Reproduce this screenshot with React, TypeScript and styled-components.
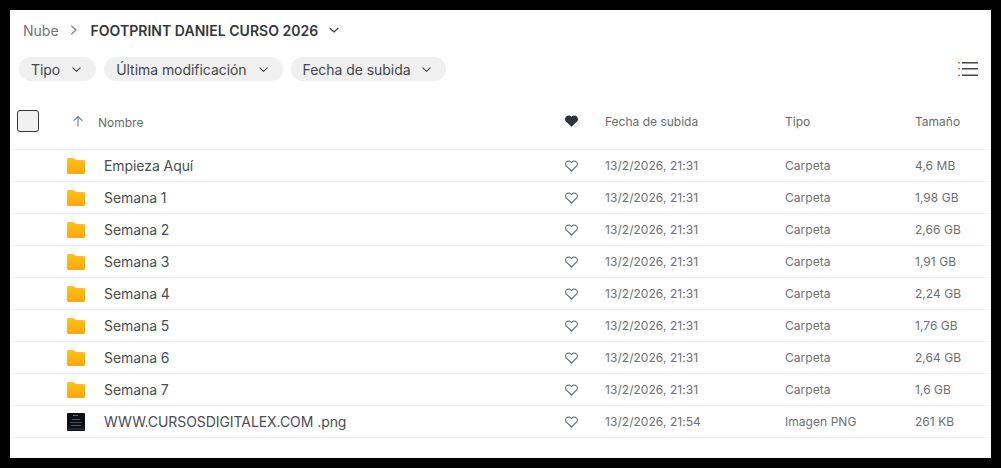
import React from "react";
import styled, { createGlobalStyle } from "styled-components";

const Global = createGlobalStyle`
  html, body { margin: 0; padding: 0; background: #000; }
  * { box-sizing: border-box; }
`;

const Frame = styled.div`
  width: 1001px;
  height: 468px;
  padding: 10px;
  background: #000;
  font-family: Inter, "Liberation Sans", sans-serif;
  overflow: hidden;
`;

const Panel = styled.main`
  height: 448px;
  background: #fff;
  display: flex;
  flex-direction: column;
`;

const Breadcrumb = styled.nav`
  height: 40px;
  padding: 0 0 0 13px;
  display: flex;
  align-items: center;
  font-size: 14px;
`;

const Crumb = styled.span`
  color: #6f7479;
`;

const Current = styled.span`
  color: #33363a;
  font-weight: 600;
  font-size: 14px;
  letter-spacing: 0.03px;
`;

const CrumbSep = styled.svg`
  width: 10px;
  height: 10px;
  margin: 0 12px 0 10px;
  color: #777;
`;

const CrumbCaret = styled.svg`
  width: 12px;
  height: 12px;
  margin-left: 10px;
  color: #444;
`;

const Toolbar = styled.div`
  height: 24px;
  margin-top: 7px;
  padding: 0 13px 0 9px;
  display: flex;
  align-items: center;
  gap: 8px;
`;

const Pill = styled.button`
  height: 24px;
  padding: 0 14px 0 12px;
  border: 0;
  border-radius: 12px;
  background: #f0f0f0;
  color: #44474b;
  font: 400 14px Inter, "Liberation Sans", sans-serif;
  letter-spacing: -0.05px;
  display: flex;
  align-items: center;
  gap: 11px;
`;

const PillCaret = styled.svg`
  width: 11px;
  height: 11px;
  color: #444;
`;

const ListButton = styled.svg`
  margin-left: auto;
  width: 20px;
  height: 16px;
  color: #44474b;
`;

const HeaderRow = styled.div`
  height: 51px;
  margin-top: 18px;
  padding-left: 7px;
  padding-bottom: 6px;
  border-bottom: 1px solid #f2f2f2;
  display: grid;
  grid-template-columns: 55px 26px 467px 40px 180px 130px 1fr;
  align-items: center;
  font-size: 12px;
  color: #666c70;
`;

const NameHead = styled.span`
  padding-top: 2px;
`;

const Check = styled.span`
  width: 22px;
  height: 22px;
  border: 1px solid #33363a;
  border-radius: 3px;
  background: #f0f0f0;
  display: block;
`;

const SortIcon = styled.svg`
  width: 12px;
  height: 12px;
  color: #5e7f8c;
`;

const Row = styled.div`
  height: 32px;
  padding-left: 57px;
  border-bottom: 1px solid #f2f2f2;
  display: grid;
  grid-template-columns: 37px 461px 40px 180px 130px 1fr;
  align-items: center;
  font-size: 12px;
  color: #6a6f73;
  letter-spacing: 0.004em;
`;

const Name = styled.span`
  font-size: 14px;
  color: #4a4d51;
  letter-spacing: -0.005em;
`;

const Thumb = styled.svg`
  width: 18px;
  height: 18px;
  display: block;
`;

const FolderSvg = styled.svg`
  width: 18px;
  height: 16px;
  display: block;
`;

const HeartIcon = styled.svg`
  width: 13px;
  height: 12px;
  display: block;
`;

const Caret = () => (
  <path d="M2 4.2 6 8l4-3.8" fill="none" stroke="currentColor" strokeWidth="1.2" strokeLinecap="round" strokeLinejoin="round" />
);

const Folder = () => (
  <FolderSvg viewBox="0 0 18 16">
    <defs>
      <linearGradient id="fold" x1="0" y1="0" x2="0" y2="1">
        <stop offset="0" stopColor="#ffc21e" />
        <stop offset="1" stopColor="#ffa60d" />
      </linearGradient>
    </defs>
    <path d="M1.2 0h5c.5 0 .8.2 1.1.5L9 2h7.8c.7 0 1.2.5 1.2 1.2v11.600c0 .7-.5 1.200-1.200 1.200H1.200C.5 16 0 15.500 0 14.800V1.200C0 .5.500 0 1.200 0Z" fill="url(#fold)" />
  </FolderSvg>
);

const Image = () => (
  <Thumb viewBox="0 0 18 18">
    <rect width="18" height="18" rx="1" fill="#0a0e16" />
    <rect x="6" y="2" width="5" height="1" fill="#6a6a6a" />
    <rect x="5" y="6" width="8" height="1" fill="#55595c" />
    <rect x="3" y="9" width="12" height="1" fill="#44484c" />
    <rect x="4" y="12" width="10" height="1" fill="#55595d" />
    <rect x="1" y="15" width="16" height="2" fill="#1c2c3c" />
  </Thumb>
);

const Heart = ({ filled }: { filled?: boolean }) => (
  <HeartIcon viewBox="0 0 14 13">
    <path
      d="M7 12 1.800 7A3.300 3.300 0 0 1 1.600 2.100 3.400 3.400 0 0 1 7 2.700a3.400 3.400 0 0 1 5.400-.6A3.300 3.300 0 0 1 12.200 7Z"
      fill={filled ? "#2f3236" : "none"}
      stroke={filled ? "#2f3236" : "#5d6f78"}
      strokeWidth="1.200"
      strokeLinejoin="round"
    />
  </HeartIcon>
);

const rows = [
  ["Empieza Aquí", "21:31", "Carpeta", "4,6 MB"],
  ["Semana 1", "21:31", "Carpeta", "1,98 GB"],
  ["Semana 2", "21:31", "Carpeta", "2,66 GB"],
  ["Semana 3", "21:31", "Carpeta", "1,91 GB"],
  ["Semana 4", "21:31", "Carpeta", "2,24 GB"],
  ["Semana 5", "21:31", "Carpeta", "1,76 GB"],
  ["Semana 6", "21:31", "Carpeta", "2,64 GB"],
  ["Semana 7", "21:31", "Carpeta", "1,6 GB"],
  ["WWW.CURSOSDIGITALEX.COM .png", "21:54", "Imagen PNG", "261 KB"],
];

const filters = ["Tipo", "Última modificación", "Fecha de subida"];

export default function App() {
  return (
    <Frame>
      <Global />
      <Panel>
        <Breadcrumb>
          <Crumb>Nube</Crumb>
          <CrumbSep viewBox="0 0 10 10">
            <path d="M2.500 1l4.500 4-4.500 4" fill="none" stroke="currentColor" strokeWidth="1.100" strokeLinecap="round" strokeLinejoin="round" />
          </CrumbSep>
          <Current>FOOTPRINT DANIEL CURSO 2026</Current>
          <CrumbCaret viewBox="0 0 12 12">
            <Caret />
          </CrumbCaret>
        </Breadcrumb>
        <Toolbar>
          {filters.map((f) => (
            <Pill key={f}>
              {f}
              <PillCaret viewBox="0 0 12 12">
                <Caret />
              </PillCaret>
            </Pill>
          ))}
          <ListButton viewBox="0 0 20 16">
            <g fill="currentColor">
              <rect x="0" y="1" width="2" height="1.500" fill="#c9894a" />
              <rect x="0" y="7" width="2" height="1.500" fill="#c9894a" />
              <rect x="0" y="13.500" width="2" height="1.500" fill="#c9894a" />
              <rect x="4" y="1" width="16" height="1.500" />
              <rect x="4" y="7" width="16" height="1.500" />
              <rect x="4" y="13.500" width="16" height="1.500" />
            </g>
          </ListButton>
        </Toolbar>
        <HeaderRow>
          <Check />
          <SortIcon viewBox="0 0 12 12">
            <path d="M6 11V1.500M2 5.300 6 1.500l4 3.800" fill="none" stroke="currentColor" strokeWidth="1.100" strokeLinecap="round" strokeLinejoin="round" />
          </SortIcon>
          <NameHead>Nombre</NameHead>
          <Heart filled />
          <span>Fecha de subida</span>
          <span>Tipo</span>
          <span>Tamaño</span>
        </HeaderRow>
        {rows.map(([name, time, type, size]) => (
          <Row key={name}>
            {type === "Carpeta" ? <Folder /> : <Image />}
            <Name>{name}</Name>
            <Heart />
            <span>13/2/2026, {time}</span>
            <span>{type}</span>
            <span>{size}</span>
          </Row>
        ))}
      </Panel>
    </Frame>
  );
}
